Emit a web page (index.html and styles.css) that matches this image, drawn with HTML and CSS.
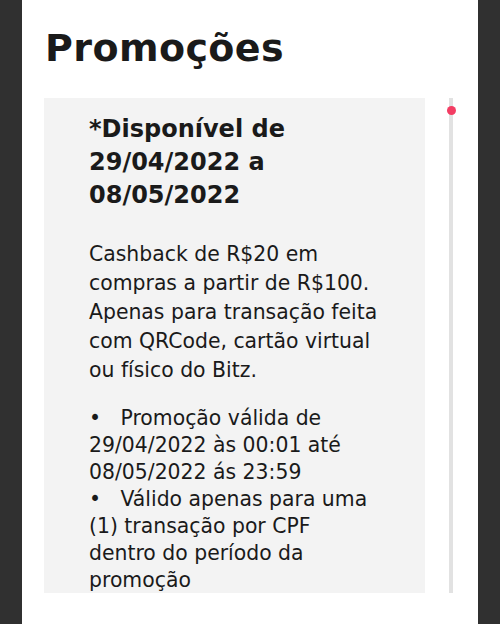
FILE: index.html
```html
<!DOCTYPE html>
<html lang="pt-BR">
<head>
    <meta charset="UTF-8">
    <title>Promoções</title>
    <link rel="stylesheet" href="styles.css">
</head>
<body>
<div class="screen">
    <h1 class="title">Promoções</h1>
    <div class="content">
        <div class="card">
            <h2 class="card-title">*Disponível de 29/04/2022 a 08/05/2022</h2>
            <p class="card-text">Cashback de R$20 em compras a partir de R$100. Apenas para transação feita com QRCode, cartão virtual ou físico do Bitz.</p>
            <p class="card-text rules">•&nbsp;&nbsp;&nbsp;Promoção válida de 29/04/2022 às 00:01 até 08/05/2022 ás 23:59<br>•&nbsp;&nbsp;&nbsp;Válido apenas para uma (1) transação por CPF dentro do período da promoção</p>
        </div>
        <div class="scrollbar">
            <div class="thumb"></div>
        </div>
    </div>
</div>
</body>
</html>
```

FILE: styles.css
```css
html, body { margin: 0; height: 100%; }
body { background: #303030; font-family: "DejaVu Sans", "Noto Sans", sans-serif; color: #1a1a1a; }
.screen { width: 456px; height: 624px; margin: 0 auto; background: #fff; overflow: hidden; }
.title { margin: 0; padding: 22px 0 0 23px; font-size: 38px; font-weight: 700; line-height: 52px; letter-spacing: 0.4px; }
.content { display: flex; margin-top: 24px; height: 495px; }
.card { width: 381px; margin-left: 22px; background: #f3f3f3; padding: 15px 30px 0 45px; box-sizing: border-box; overflow: hidden; }
.card-title { margin: 0 0 28px; font-size: 24px; font-weight: 700; line-height: 33px; }
.card-text { margin: 0 0 20px; font-size: 20.4px; line-height: 29px; }
.rules { margin-right: 12px; line-height: 27px; }
.scrollbar { position: relative; width: 4px; margin-left: 24px; background: #e2e2e2; }
.thumb { position: absolute; left: -2.5px; top: 8px; width: 9px; height: 9px; border-radius: 50%; background: #f33d63; }
```
